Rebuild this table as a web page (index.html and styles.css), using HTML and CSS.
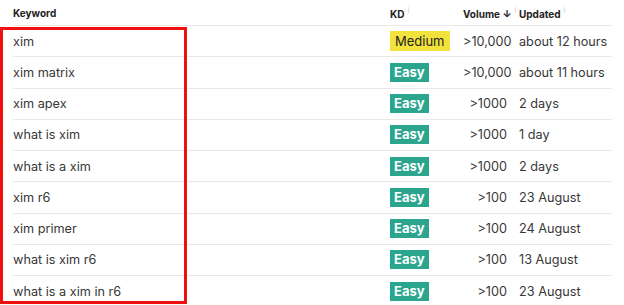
FILE: index.html
```html
<!DOCTYPE html>
<html>
<head>
<meta charset="utf-8">
<link rel="stylesheet" href="styles.css">
</head>
<body>
<div class="table">
  <div class="row head">
    <div class="c kw">Keyword</div>
    <div class="c kd">KD<span class="info">i</span></div>
    <div class="c vol">Volume <span class="arrow">↓</span><span class="info">i</span></div>
    <div class="c upd">Updated<span class="info">i</span></div>
  </div>
  <div class="row"><div class="c kw">xim</div><div class="c kd"><span class="badge medium">Medium</span></div><div class="c vol">&gt;10,000</div><div class="c upd">about 12 hours</div></div>
  <div class="row"><div class="c kw">xim matrix</div><div class="c kd"><span class="badge easy">Easy</span></div><div class="c vol">&gt;10,000</div><div class="c upd">about 11 hours</div></div>
  <div class="row"><div class="c kw">xim apex</div><div class="c kd"><span class="badge easy">Easy</span></div><div class="c vol">&gt;1000</div><div class="c upd">2 days</div></div>
  <div class="row"><div class="c kw">what is xim</div><div class="c kd"><span class="badge easy">Easy</span></div><div class="c vol">&gt;1000</div><div class="c upd">1 day</div></div>
  <div class="row"><div class="c kw">what is a xim</div><div class="c kd"><span class="badge easy">Easy</span></div><div class="c vol">&gt;1000</div><div class="c upd">2 days</div></div>
  <div class="row"><div class="c kw">xim r6</div><div class="c kd"><span class="badge easy">Easy</span></div><div class="c vol">&gt;100</div><div class="c upd">23 August</div></div>
  <div class="row"><div class="c kw">xim primer</div><div class="c kd"><span class="badge easy">Easy</span></div><div class="c vol">&gt;100</div><div class="c upd">24 August</div></div>
  <div class="row"><div class="c kw">what is xim r6</div><div class="c kd"><span class="badge easy">Easy</span></div><div class="c vol">&gt;100</div><div class="c upd">13 August</div></div>
  <div class="row"><div class="c kw">what is a xim in r6</div><div class="c kd"><span class="badge easy">Easy</span></div><div class="c vol">&gt;100</div><div class="c upd">23 August</div></div>
  <div class="highlight"></div>
</div>
</body>
</html>
```

FILE: styles.css
```css
html, body {
  margin: 0;
  padding: 0;
  background: #ffffff;
}
body {
  font-family: Inter, "Noto Sans", sans-serif;
  color: #383838;
}
.table {
  position: relative;
  width: 599px;
  margin-left: 13px;
}
.row {
  display: flex;
  align-items: center;
  height: 30.25px;
  border-bottom: 1px solid #e9e9e9;
  font-size: 12.7px;
}
.row.head {
  height: 25px;
  font-size: 10px;
  font-weight: 700;
  color: #222222;
}
.c {
  white-space: nowrap;
}
.kw {
  width: 377px;
}
.kd {
  width: 73px;
}
.vol {
  width: 50px;
  text-align: right;
  padding-right: 6px;
  box-sizing: border-box;
}
.head .vol {
  padding-right: 0;
  text-align: left;
}
.upd {
  margin-left: 6px;
  flex: 1;
}
.info {
  display: inline-block;
  font-size: 8px;
  font-weight: 400;
  color: #d0d0d0;
  vertical-align: 5px;
  margin-left: 3px;
}
.arrow {
  font-size: 10px;
}
.badge {
  display: inline-block;
  height: 20px;
  line-height: 20px;
  padding: 0 5px;
  font-size: 13px;
}
.badge.medium {
  background: #f2e23c;
  color: #222222;
}
.badge.easy {
  background: #2ba58e;
  color: #ffffff;
  font-weight: 700;
  padding: 0 4px;
  height: 19px;
  line-height: 19px;
}
.highlight {
  position: absolute;
  left: -13px;
  top: 27px;
  width: 187px;
  height: 277px;
  border: 3px solid #f40f0f;
  box-sizing: border-box;
}
```
